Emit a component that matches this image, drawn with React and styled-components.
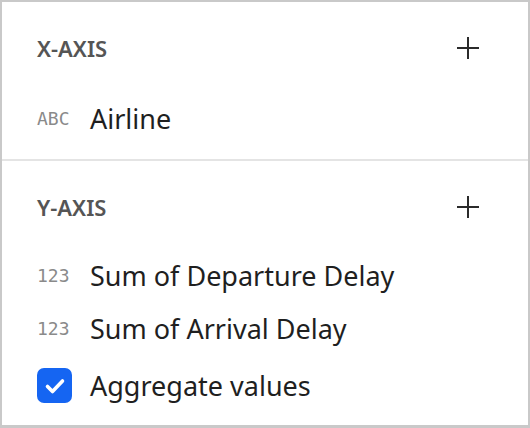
import React from 'react'
import styled, { createGlobalStyle } from 'styled-components'

const GlobalStyle = createGlobalStyle`
  * { box-sizing: border-box; }
  body {
    margin: 0;
    background: #ffffff;
    font-family: "Noto Sans", sans-serif;
  }
`

const sections = [
  {
    title: 'X-AXIS',
    fields: [{ type: 'ABC', name: 'Airline' }],
  },
  {
    title: 'Y-AXIS',
    fields: [
      { type: '123', name: 'Sum of Departure Delay' },
      { type: '123', name: 'Sum of Arrival Delay' },
    ],
    aggregate: true,
  },
]

const PlusIcon = () => (
  <svg width="24" height="24" viewBox="0 0 24 24" fill="none">
    <path d="M1 12h22M12 1v22" stroke="#2b2b2b" strokeWidth="2" />
  </svg>
)

export default function App() {
  return (
    <>
      <GlobalStyle />
      <Panel>
        {sections.map((section) => (
          <Section key={section.title}>
            <Header>
              <Title>{section.title}</Title>
              <AddButton aria-label={`Add ${section.title}`}>
                <PlusIcon />
              </AddButton>
            </Header>
            <FieldList $first={section.title === 'X-AXIS'}>
              {section.fields.map((field) => (
                <FieldRow key={field.name}>
                  <TypeTag>{field.type}</TypeTag>
                  <FieldName>{field.name}</FieldName>
                </FieldRow>
              ))}
              {section.aggregate && (
                <CheckRow>
                  <CheckBox>
                    <svg width="24" height="24" viewBox="0 0 24 24" fill="none">
                      <path
                        d="M4.5 12.5l5 5 10-10.5"
                        stroke="#ffffff"
                        strokeWidth="3.6"
                        strokeLinecap="round"
                        strokeLinejoin="round"
                      />
                    </svg>
                  </CheckBox>
                  <FieldName>Aggregate values</FieldName>
                </CheckRow>
              )}
            </FieldList>
          </Section>
        ))}
      </Panel>
    </>
  )
}

const Panel = styled.div`
  width: 530px;
  height: 428px;
  border: 2px solid #c9c9c9;
  border-bottom-width: 3px;
  background: #ffffff;
  overflow: hidden;
`

const Section = styled.div`
  padding: 22px 48px 14px 35px;
  border-bottom: 2px solid #e4e4e4;

  &:last-child {
    border-bottom: none;
  }
`

const Header = styled.div`
  display: flex;
  align-items: center;
  justify-content: space-between;
  height: 48px;
`

const Title = styled.div`
  color: #555555;
  font-size: 22px;
  font-weight: 600;
  line-height: 1;
`

const AddButton = styled.div`
  display: flex;
  align-items: center;
  justify-content: center;
  width: 24px;
  height: 24px;
`

const FieldList = styled.div`
  display: flex;
  flex-direction: column;
  margin-top: ${(p) => (p.$first ? '20px' : '18px')};
`

const FieldRow = styled.div`
  display: flex;
  align-items: center;
  height: 53px;
`

const CheckRow = styled(FieldRow)`
  margin-top: 4px;
`

const TypeTag = styled.span`
  width: 53px;
  flex-shrink: 0;
  color: #8a8a8a;
  font-family: "DejaVu Sans Mono", monospace;
  font-size: 18px;
  line-height: 1;
`

const FieldName = styled.span`
  color: #1f1f1f;
  font-size: 27px;
  line-height: 1;
`

const CheckBox = styled.div`
  width: 35px;
  height: 35px;
  margin-right: 18px;
  border-radius: 7px;
  background: #1565f2;
  display: flex;
  align-items: center;
  justify-content: center;
  flex-shrink: 0;
`
